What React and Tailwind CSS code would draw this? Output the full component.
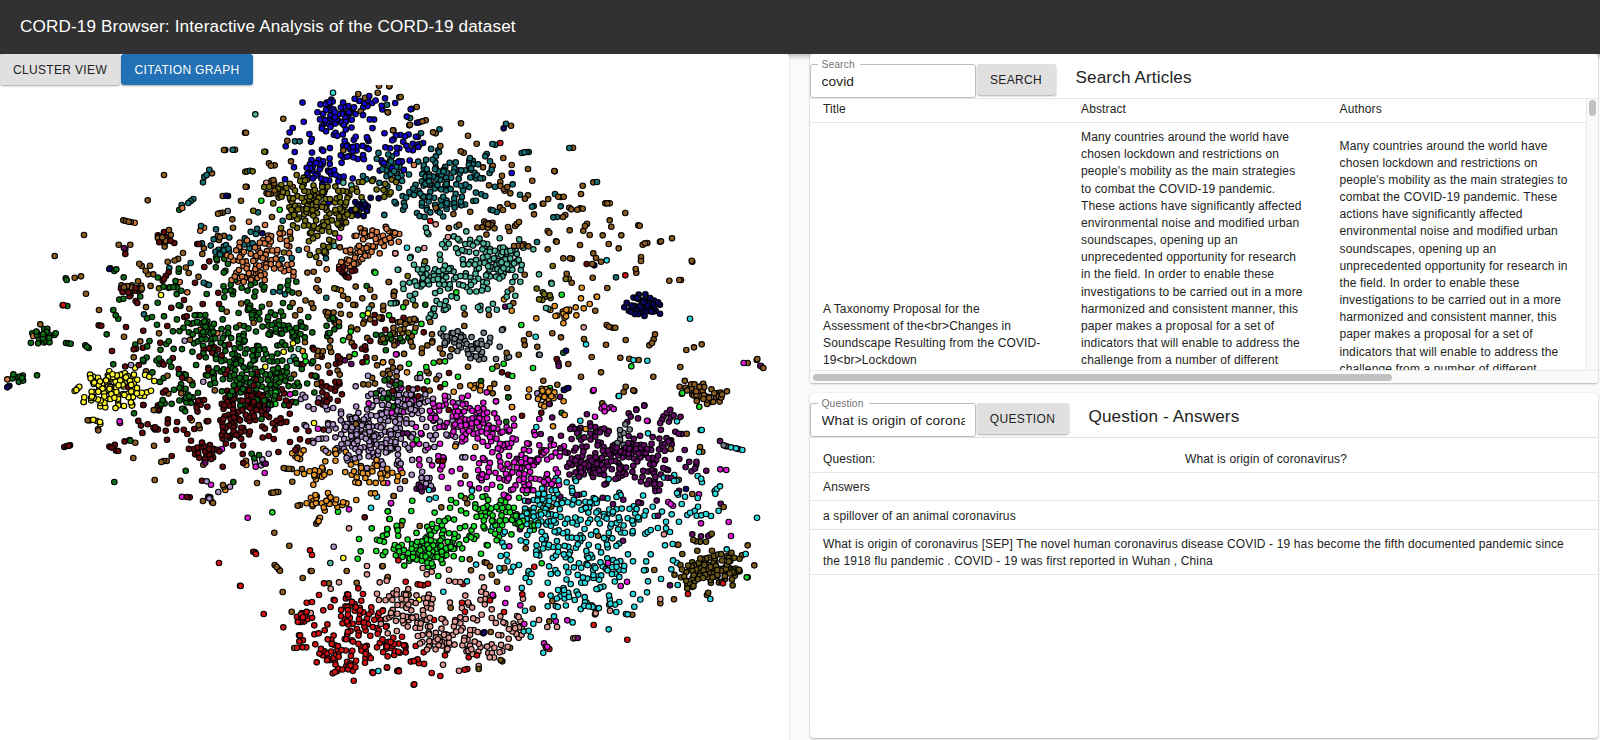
import React from "react";

const COLORS = {
  B: "#8c5c20", b: "#1606d2", t: "#167479", o: "#78720f", c: "#d77b45", g: "#0e6d17",
  m: "#670b0e", y: "#fbf52c", a: "#4fb79f", n: "#0b0764", s: "#77828b", l: "#ae92c8",
  M: "#e11bd9", p: "#640c68", G: "#1add28", C: "#2bdadf", r: "#d51317", k: "#e09892",
  O: "#e39225", d: "#6a5715",
};

// [colour, centre x, centre y, spread x, spread y, count]
const CLUSTERS = [
  ["b", 337, 115, 13, 7, 62], ["b", 318, 167, 8, 7, 32], ["b", 357, 151, 8, 7, 22], ["b", 370, 102, 10, 4, 12],
  ["b", 394, 153, 7, 11, 22], ["b", 350, 137, 30, 22, 46], ["b", 410, 145, 6, 8, 18], ["b", 334, 178, 7, 4, 10],
  ["t", 386, 172, 10, 9, 28], ["t", 440, 190, 22, 15, 80], ["t", 432, 197, 13, 10, 28], ["t", 458, 172, 17, 10, 26],
  ["t", 425, 172, 36, 24, 50], ["t", 220, 249, 8, 7, 15], ["t", 250, 238, 14, 6, 12],
  ["o", 322, 222, 14, 12, 74], ["o", 300, 198, 14, 10, 40], ["o", 338, 192, 18, 9, 28], ["o", 325, 207, 21, 12, 40],
  ["o", 280, 187, 7, 4, 10], ["o", 390, 183, 8, 8, 12], ["o", 307, 255, 14, 3, 9], ["o", 545, 294, 5, 4, 10],
  ["c", 255, 256, 14, 9, 62], ["c", 272, 246, 17, 9, 22], ["c", 378, 236, 11, 5, 36], ["c", 361, 252, 9, 5, 28],
  ["c", 243, 278, 8, 3, 18], ["c", 272, 268, 18, 8, 14], ["c", 347, 262, 5, 4, 10],
  ["g", 213, 338, 17, 9, 60], ["g", 262, 374, 19, 14, 90], ["g", 255, 360, 26, 22, 66], ["g", 263, 288, 22, 8, 26],
  ["g", 165, 355, 14, 22, 36], ["g", 257, 320, 15, 10, 24], ["g", 295, 331, 9, 4, 22], ["g", 43, 338, 6, 5, 26],
  ["g", 173, 288, 8, 4, 11], ["g", 220, 262, 8, 5, 10], ["g", 222, 375, 15, 14, 28], ["g", 330, 325, 6, 6, 12],
  ["g", 190, 305, 38, 20, 26], ["g", 185, 400, 16, 8, 24], ["g", 276, 394, 25, 12, 30], ["g", 18, 380, 4, 3, 10],
  ["g", 390, 340, 11, 5, 12], ["g", 390, 393, 9, 7, 12],
  ["m", 248, 393, 17, 10, 46], ["m", 243, 413, 13, 8, 46], ["m", 210, 450, 10, 5, 26], ["m", 232, 435, 8, 5, 24],
  ["m", 250, 410, 40, 24, 70], ["m", 133, 290, 8, 3, 13], ["m", 213, 347, 5, 3, 9], ["m", 347, 269, 5, 4, 12],
  ["m", 165, 239, 6, 3, 8], ["m", 155, 427, 14, 4, 16], ["m", 118, 447, 5, 3, 7], ["m", 330, 393, 10, 9, 18],
  ["m", 410, 393, 9, 4, 9], ["m", 180, 360, 48, 32, 24], ["m", 345, 345, 32, 30, 22],
  ["y", 113, 389, 15, 9, 112], ["y", 125, 385, 14, 9, 14],
  ["a", 440, 277, 14, 8, 58], ["a", 494, 266, 14, 10, 80], ["a", 465, 243, 12, 4, 20], ["a", 477, 284, 12, 6, 18],
  ["a", 505, 252, 11, 7, 18], ["a", 470, 300, 27, 9, 20], ["a", 436, 308, 5, 4, 10], ["a", 445, 270, 27, 21, 22],
  ["s", 456, 337, 9, 5, 26], ["s", 474, 346, 10, 7, 28], ["s", 623, 435, 5, 5, 9],
  ["n", 645, 305, 9, 5, 42], ["n", 360, 209, 5, 4, 14],
  ["l", 362, 434, 14, 12, 108], ["l", 398, 408, 15, 9, 58], ["l", 372, 442, 21, 15, 66], ["l", 390, 425, 18, 20, 36],
  ["l", 410, 397, 14, 9, 16], ["l", 445, 432, 11, 8, 14], ["l", 422, 478, 7, 5, 10], ["l", 325, 420, 10, 16, 18],
  ["O", 313, 473, 9, 3, 17], ["O", 330, 502, 11, 4, 28], ["O", 365, 472, 14, 6, 27], ["O", 299, 456, 5, 3, 8],
  ["O", 547, 393, 9, 6, 28], ["O", 567, 314, 8, 5, 14], ["O", 480, 388, 5, 3, 9], ["O", 385, 476, 9, 7, 10], ["O", 340, 453, 10, 4, 8],
  ["M", 474, 425, 15, 9, 72], ["M", 495, 432, 18, 10, 26], ["M", 515, 463, 16, 12, 58], ["M", 540, 480, 11, 7, 24],
  ["M", 440, 415, 22, 14, 36], ["M", 500, 475, 22, 12, 28], ["M", 550, 450, 11, 5, 14], ["M", 430, 458, 34, 15, 24], ["M", 607, 408, 4, 2, 7],
  ["p", 589, 467, 11, 6, 48], ["p", 627, 451, 14, 5, 46], ["p", 587, 433, 11, 6, 24], ["p", 643, 470, 16, 11, 38],
  ["p", 614, 456, 24, 14, 44], ["p", 657, 445, 9, 10, 18], ["p", 425, 485, 5, 3, 9], ["p", 657, 490, 2, 6, 9],
  ["p", 670, 417, 5, 4, 10], ["p", 691, 467, 5, 3, 7], ["p", 587, 449, 36, 22, 24],
  ["C", 573, 505, 30, 18, 84], ["C", 565, 525, 28, 17, 48], ["C", 625, 515, 18, 12, 38], ["C", 560, 548, 20, 12, 36],
  ["C", 590, 568, 19, 8, 34], ["C", 565, 596, 9, 5, 20], ["C", 603, 607, 10, 5, 18], ["C", 605, 540, 24, 20, 26],
  ["C", 570, 565, 58, 26, 32], ["C", 545, 500, 10, 10, 20], ["C", 678, 505, 20, 18, 12],
  ["G", 425, 551, 15, 8, 94], ["G", 430, 540, 23, 13, 46], ["G", 500, 512, 22, 8, 44], ["G", 480, 522, 20, 10, 22],
  ["G", 465, 505, 40, 12, 24], ["G", 525, 518, 9, 7, 16], ["G", 400, 345, 35, 17, 9],
  ["d", 713, 568, 12, 7, 104], ["d", 683, 578, 7, 6, 18], ["d", 710, 572, 17, 10, 16],
  ["r", 362, 622, 12, 10, 36], ["r", 345, 635, 22, 16, 46], ["r", 303, 618, 4, 3, 17], ["r", 350, 605, 5, 4, 14],
  ["r", 390, 648, 8, 5, 22], ["r", 330, 655, 8, 4, 12], ["r", 350, 668, 3, 5, 11], ["r", 417, 661, 4, 2, 8], ["r", 355, 647, 20, 11, 20],
  ["k", 408, 602, 13, 8, 34], ["k", 440, 636, 13, 8, 38], ["k", 410, 617, 16, 8, 28], ["k", 452, 640, 17, 8, 20],
  ["k", 482, 650, 13, 4, 20], ["k", 455, 612, 26, 14, 28], ["k", 517, 625, 6, 6, 17], ["k", 485, 597, 5, 3, 8],
  ["B", 400, 338, 9, 5, 14], ["B", 405, 322, 7, 2, 11], ["B", 708, 397, 8, 5, 34], ["B", 692, 388, 6, 4, 12],
  ["B", 275, 190, 8, 8, 12], ["B", 165, 237, 4, 3, 7], ["B", 130, 286, 5, 4, 11], ["B", 487, 227, 6, 3, 8],
  ["B", 370, 370, 52, 25, 44], ["B", 330, 305, 38, 26, 34], ["B", 500, 215, 50, 26, 18], ["B", 445, 350, 60, 40, 34],
  ["B", 240, 300, 60, 34, 26], ["B", 180, 400, 24, 20, 14],
];

// Share of each cluster's papers that gets drawn.
const DENSITY = 0.8;

// Individually placed papers. Each tile has its own origin, in thirds of a pixel.
const TILES = [
  [0, 80, {
    B: "850,116 735,158 738,158 672,210 676,210 705,209 862,182 873,244 807,250 813,257 824,256 492,285 443,361 737,320 740,320 636,280 668,348 723,362 654,401 660,399 668,398 697,418 699,443 816,411 370,421 378,423 386,425 392,426 252,465 164,528 356,494 391,494 507,450 549,519 607,522 503,545 418,551 425,558 437,572 450,557 444,583 460,583 224,593 243,589 258,641 566,579 297,690 372,770 121,733 401,832 438,874 1137,17 1168,19 1075,42 1095,53 1133,38 1163,97 1082,94 1179,151 1030,211 1166,606 1183,635 1087,655 1123,651 1072,748 1048,772 1149,881 568,686 680,695 421,784 477,760 544,940 953,600 941,575 949,624 896,640 900,690 1020,676",
    t: "885,184 899,184 698,209 628,269 613,290 609,307 620,285 580,357 572,363 565,369 545,375 750,272 774,397 603,438 572,549 508,564 606,490 611,608 620,613 627,615 432,703 1161,74 848,422 648,448 641,478 845,538 875,534 896,510 978,535 855,643 839,634 820,636 979,653 1089,288",
    C: "999,38 1181,640",
    a: "766,103 1030,308 1054,316 1003,498 1193,569 1187,669 1107,686 881,831 896,807 870,843",
    b: "878,144 911,125 857,199 884,216 882,262 855,298 987,367 967,313 972,338",
    o: "793,215 796,215 736,275 742,274 758,274 760,392 890,285 843,444 879,436 872,476 477,625 1003,625 1010,627",
    c: "404,428 547,384 612,443 601,452 747,425 795,435 539,606 562,637 100,768 22,898 980,568 954,862 600,750 652,760",
    n: "679,347 684,348 787,460 331,565 328,567 1087,385 1136,355 1112,353 22,922 28,917",
    G: "784,362 839,389 1123,575 1126,578 1088,706 914,828 917,844 827,937 826,972",
    k: "799,308 1186,520",
    s: "683,393",
    M: "1018,473 1188,823 870,943 1106,970",
    m: "592,492 597,492 376,522 523,489 492,596 498,587 506,577 488,602 407,663 412,669 514,683 552,660 613,561 628,544 585,608 655,638 657,672 608,672 296,736 304,737 378,741 336,813 408,806 401,808 430,752 502,738 553,711 560,709 430,975 989,878 965,830 1063,799 1008,852 1019,847 1124,705 1145,712 1177,720 1173,905 1111,783",
    p: "372,504 376,508 1035,841 1054,852",
    r: "188,676 190,675",
    y: "483,645 229,930 233,925 238,920 224,933 251,966 405,863 448,890 463,903 453,932 441,937 432,948 879,790 851,815 796,860 1104,700",
    O: "1023,631 908,813 1149,847",
    g: "349,568 343,573 197,595 200,600 202,678 340,690 347,706 355,716 320,763 198,789 205,790 212,791 256,796 261,800 266,804 111,886 340,853 473,668 492,709 456,711 441,715 538,389 584,706 592,705 601,706 616,705 925,711 870,681 889,605 865,602 1100,618",
    l: "554,782 393,855 610,905 1104,887 1067,919 908,944 916,952 903,957",
  }],
  [380, 80, {
    B: "28,18 58,52 62,51 110,81 24,97 137,121 127,124 88,136 90,134 40,151 243,130 159,157 167,160 264,167 290,191 181,198 242,214 251,218 370,234 338,257 395,255 444,267 457,302 393,137 579,203 523,273 524,274 608,317 640,307 603,342 444,346 399,378 535,350 542,351 551,350 490,371 488,371 676,370 682,370 736,399 568,383 574,388 592,389 600,385 608,386 462,403 556,405 549,411 689,421 694,440 775,436 779,437 621,431 615,438 610,452 629,465 668,466 724,466 686,492 716,505 600,495 569,451 503,453 508,458 530,485 528,484 503,508 417,426 410,432 405,438 384,441 388,453 876,475 840,485 843,484 802,489 795,490 788,494 550,535 570,535 576,536 640,520 648,534 637,552 663,545 783,531 783,543 767,567 769,578 638,593 682,624 935,542 937,545 868,602 898,600 903,600 560,581 566,596 575,608 650,650 646,692 680,735 687,740 698,743 706,743 543,772 612,777 678,794 737,780 825,763 821,778 816,789 808,796 919,810 942,802 965,793 635,831 721,833 748,836 776,840 901,861 663,877 820,890 603,890 565,852 416,824 432,781 447,762 1132,837 1103,849 1150,864 737,920 731,936 760,931 763,933 1041,934 532,914 490,902 27,606 43,635 10,677 151,726 156,763 253,738 264,860 327,705 434,584 402,498 413,497 425,497 431,493 445,499 382,924 667,970 361,306 371,326 374,332 382,321 361,318 327,316 360,382 369,390 366,287 309,262",
    t: "378,131 425,219 433,217 440,216 446,216 568,204 316,229 320,222 651,306 525,342 531,411 520,412 542,379 456,380 461,378 420,344 398,313 332,389 338,391 350,396 471,486 708,592 345,320 280,363 288,362 316,348 301,295 309,295",
    n: "371,145 643,556 558,812 562,925 552,929 840,701 733,682 740,668 565,924",
    r: "361,189 151,423 736,586", b: "395,279 111,128 118,127 92,88 95,86 15,55",
    k: "204,471 133,504 46,520 611,742 167,433", C: "81,503 680,541 930,716 618,793 760,840 802,842 717,948 467,770",
    c: "1130,840 58,462 56,485 102,255", O: "689,370 605,623 603,655 629,672 611,685 587,682 651,650 395,692 469,715 511,690 524,678 372,658 445,950 396,981 81,877 9,847 221,935",
    G: "545,644 229,637 424,735 459,864 371,851 337,866 397,888 234,890 195,844 161,848 139,861 87,851 142,904 195,912 754,859 120,882 27,706 510,924 905,941",
    m: "620,552 530,837 366,877 385,884 131,757 37,720 5,717 207,879 181,922 33,904",
    p: "376,680 535,848 536,858 1144,859 1141,857 793,976 540,950 507,972 769,988",
    M: "1091,849 641,930 639,933 50,823 348,964 163,980 293,984 64,924 320,937 50,790",
    a: "514,608 515,611 477,583 421,605 383,635 380,650 406,647 460,508 55,569 90,534 92,530 89,647 47,668 41,670 32,670 190,746 498,684 505,686 102,554",
    s: "477,824 479,824 369,747 366,750 359,800 381,833 387,831 348,837 210,829 320,797",
    l: "50,874 112,894 177,887 204,950 159,956 235,970 472,940",
    o: "518,558 135,544 83,588 557,597 106,676 85,758 50,668", g: "125,607 136,674 385,952 303,903 550,818",
  }],
  [0, 380, {
    B: "263,121 270,121 290,123 294,148 295,151 406,188 400,234 462,197 484,246 491,243 500,243 464,300 541,302 610,254 771,309 877,305 851,264 859,266 867,266 875,267 906,267 814,338 820,338 835,336 893,377 900,375 949,431 953,425 823,458 868,497 824,555 830,561 840,572 908,594 932,573 935,573 848,636 875,695 1040,573 1147,559 1070,608 987,610 1163,591 609,363 636,366 639,369 669,315 671,320 738,242 883,804",
    M: "359,124 360,129 633,314 546,350 666,207 743,413 794,279 767,260 954,146 1047,388 1173,369 1162,309 1175,98",
    m: "193,201 200,198 206,197 210,196 515,228 501,179 668,260 606,302 560,351 569,352 765,517 760,515 1094,412 573,182 562,162 583,147 529,150 430,75 870,186 900,178 925,184 806,168 821,177",
    g: "402,100 389,180 343,306 557,272 700,306 755,221 777,225 763,235 625,350 631,352 391,182",
    y: "280,119 300,126 301,132 251,66 301,79 942,129 1030,534",
    l: "806,221 787,238 765,247 783,256 620,304 655,336 690,320 628,355 1001,500 614,247",
    p: "616,248 797,251 792,250 803,87", O: "827,336 831,336 676,330 739,255 984,339 957,416 960,413 956,423 940,314 1069,360 1181,348 1113,340 1125,340 976,244 970,206 985,218 575,121",
    C: "1131,350 1113,383 1135,873", G: "817,397 1014,395 1163,394 1168,417 1115,445 1162,447 1077,477 1131,479 1139,482 1082,514 1129,513 1149,525 1073,536 1181,506",
    k: "1047,445 1101,558 1101,583 1017,607 992,626 1139,607 1160,602 1131,641 1137,660 1180,640 932,699 1158,716 1168,712 1163,760",
    a: "991,549", r: "657,549 768,522 836,568 722,618 720,617 791,702 850,742 930,511 936,525 972,610 957,645 936,666 920,668 1075,625 1089,642 1084,662 1004,661 1001,659 943,736 956,760 900,766 897,766 983,778 946,793 891,803 907,802 919,802 950,847 1012,873 998,880 1005,876 1061,902 1114,682 1149,691 1160,738 1161,862 1119,879 1095,848 1192,873 1117,876",
  }],
  [380, 380, {
    p: "793,77 769,90 742,126 873,207 914,210 898,237 834,227 979,272 1020,183 1075,207 850,264 864,270 858,268 543,167 482,162 512,178 541,205 555,217 563,218 1022,371 897,332 937,463 963,469 985,468 834,407 870,616 699,372 730,359 775,367 783,369 668,353 729,482 590,345 597,344 541,350 445,364 420,448 593,774 886,155 896,161 905,162 68,160 82,160",
    M: "801,122 803,123 645,110 1021,268 1039,270 957,343 1046,426 963,430 1053,468 865,366 872,372 879,377 684,549 741,605 722,618 388,499 382,626 376,669 421,676 433,732 562,721 527,724 338,644 492,790 33,370 204,324 215,274 185,290 62,270 276,328 305,301 320,327 371,344 348,64 343,100 478,117 502,800",
    C: "716,48 601,122 469,141 804,160 891,124 965,150 962,150 1040,199 1053,202 1068,205 1087,210 957,216 953,288 890,302 882,303 1020,319 1010,327 1004,333 1006,341 953,354 915,350 905,372 954,380 922,405 875,403 950,407 964,406 978,402 993,408 1131,413 897,425 858,425 858,445 870,456 818,380 824,408 855,496 878,492 893,494 1040,508 1097,522 812,523 744,523 759,544 879,541 890,548 874,568 797,570 792,571 843,597 804,604 893,615 991,657 801,637 759,642 718,666 763,680 709,696 738,702 743,703 686,748 522,709 503,679 452,770 431,754 446,752 460,731 435,692 338,440 369,461 374,455 367,488 362,528 380,524 417,555 400,560 392,575 437,594 448,606 512,582 503,608 572,612 604,608 615,608 655,627 190,635 147,330 148,358 167,353 261,604 276,332 490,818 796,461 803,456 812,450 731,571",
    B: "41,348 75,303 256,287 255,355 262,370 184,382 64,436 119,438 8,558 23,593 437,505 373,564 269,538 273,571 314,547 320,549 330,559 335,584 351,605 654,467 1103,496 1086,526 1031,381 960,201 967,215 937,342 823,570 882,658 841,670 757,704 517,663 458,686 508,724 1123,556 332,756 390,803 920,161 896,299 895,494 86,644 872,207 212,683",
    d: "907,522 952,512 996,512 995,461 940,480 948,484 960,485 978,485 990,465 367,844 362,840 514,380 296,867 1063,533",
    r: "55,541 77,605 144,611 113,613 121,614 130,616 249,612 463,560 427,643 485,644 645,703 641,735 742,779 924,642 1029,610 330,661 372,696 162,720 255,695 246,668 77,817 107,798 131,817 195,826 266,832 291,826 21,863 57,874 56,871 155,879 181,888 262,867 254,869 101,914 103,913 497,800 508,807 8,693 18,740 40,773 66,770",
    k: "128,564 155,575 140,583 207,569 306,592 207,602 226,605 241,606 312,622 429,656 841,657 690,692 647,700 531,741 502,741 477,720 586,774 580,775 189,854 237,872 296,858 386,776 383,800 928,603 852,463 335,688 335,714 370,727 376,730 355,765 364,766 305,704 291,721 241,712 248,744 281,750 270,764",
    G: "110,179 213,360 97,362 24,394 29,417 22,447 94,393 303,521 320,495 323,496 247,505 175,588 1100,592 1103,592 9,525 55,467 439,339 361,320 907,39 958,80 485,550",
    O: "519,139 554,105 396,81 445,50 22,286 286,201 226,199 617,147 10,308 37,278",
    g: "379,125 545,98 385,52 597,171", s: "1031,196 1037,198 720,150", n: "918,327 310,760 313,757 552,30",
    m: "484,98 426,107 484,215 206,90 189,243 175,242", y: "117,659", l: "60,326 136,211 148,240 138,195 159,178 163,201 247,232 256,232 95,284",
  }],
];

function createRandom(seed) {
  let s = seed;
  return () => {
    s = (s + 0x6d2b79f5) | 0;
    let t = Math.imul(s ^ (s >>> 15), 1 | s);
    t = (t + Math.imul(t ^ (t >>> 7), 61 | t)) ^ t;
    return ((t ^ (t >>> 14)) >>> 0) / 4294967296;
  };
}

function buildPoints() {
  const rnd = createRandom(19);
  const pts = [];
  for (const [ox, oy, groups] of TILES) {
    for (const color of Object.keys(groups)) {
      for (const pair of groups[color].split(" ")) {
        const [x, y] = pair.split(",").map(Number);
        pts.push([ox + x / 3, oy + y / 3, color]);
      }
    }
  }
  const draw = () => {
    let r;
    do r = Math.sqrt(-2 * Math.log(1 - rnd()));
    while (r > 2.3);
    return r;
  };
  for (const [color, cx, cy, sx, sy, count] of CLUSTERS) {
    const total = Math.round(count * DENSITY);
    for (let i = 0; i < total; i++) {
      const last = pts[pts.length - 1];
      if (i > 0 && rnd() < 0.22) {
        const a = rnd() * Math.PI * 2;
        const d = 1.5 + rnd() * 3;
        pts.push([last[0] + Math.cos(a) * d, last[1] + Math.sin(a) * d, color]);
        continue;
      }
      let best = null;
      let bestGap = -1;
      for (let k = 0; k < 3; k++) {
        const r = draw();
        const a = rnd() * Math.PI * 2;
        const x = cx + Math.cos(a) * r * sx;
        const y = cy + Math.sin(a) * r * sy;
        let gap = 99;
        for (const p of pts) gap = Math.min(gap, Math.hypot(p[0] - x, p[1] - y));
        if (gap > bestGap) {
          bestGap = gap;
          best = [x, y, color];
        }
        if (gap > 4.2) break;
      }
      pts.push(best);
    }
  }
  for (let i = pts.length - 1; i > 0; i--) {
    const j = Math.floor(rnd() * (i + 1));
    [pts[i], pts[j]] = [pts[j], pts[i]];
  }
  return pts;
}

const POINTS = buildPoints();

function ClusterPlot() {
  return (
    <svg className="block h-[655px] w-[789px]" viewBox="0 85 789 655">
      {POINTS.map(([x, y, c], i) => (
        <circle key={i} cx={x.toFixed(1)} cy={y.toFixed(1)} r="2.75" fill={COLORS[c]} stroke="#000" strokeWidth="1.15" />
      ))}
    </svg>
  );
}

const PAPER = "rounded-[3px] bg-white shadow-[0_1px_2px_rgba(0,0,0,0.28),0_0_1px_rgba(0,0,0,0.2)]";
const BUTTON = "h-[31px] shrink-0 rounded-[3px] pt-[1px] text-[12px] leading-[30px] whitespace-nowrap text-center shadow-[0_1px_2px_rgba(0,0,0,0.35)]";

function Field({ label, value, legend }) {
  return (
    <div className="relative h-[34px] w-[166px] shrink-0">
      <fieldset className="absolute inset-x-0 -top-[4px] bottom-0 rounded-[3px] border border-[#bdbdbd] pl-[7px]">
        <legend className={`h-[8px] ${legend}`} />
      </fieldset>
      <span className="absolute -top-[5px] left-[12px] text-[10.3px] leading-[12px] tracking-[0.1px] text-[#757575]">{label}</span>
      <input
        className="absolute top-[9px] left-[12px] h-[18px] w-[143px] bg-transparent text-[13.7px] leading-[18px] tracking-[0.12px] outline-none"
        defaultValue={value}
        aria-label={label}
      />
    </div>
  );
}

function Lines({ lines }) {
  return lines.map((line) => (
    <div key={line} className="whitespace-nowrap">{line}</div>
  ));
}

const TITLE = ["A Taxonomy Proposal for the", "Assessment of the<br>Changes in", "Soundscape Resulting from the COVID-", "19<br>Lockdown"];
const ABSTRACT = [
  "Many countries around the world have", "chosen lockdown and restrictions on", "people's mobility as the main strategies",
  "to combat the COVID-19 pandemic.", "These actions have significantly affected", "environmental noise and modified urban",
  "soundscapes, opening up an", "unprecedented opportunity for research", "in the field. In order to enable these",
  "investigations to be carried out in a more", "harmonized and consistent manner, this", "paper makes a proposal for a set of",
  "indicators that will enable to address the", "challenge from a number of different",
];
const AUTHORS = [
  "Many countries around the world have", "chosen lockdown and restrictions on", "people's mobility as the main strategies to",
  "combat the COVID-19 pandemic. These", "actions have significantly affected", "environmental noise and modified urban",
  "soundscapes, opening up an", "unprecedented opportunity for research in", "the field. In order to enable these",
  "investigations to be carried out in a more", "harmonized and consistent manner, this", "paper makes a proposal for a set of",
  "indicators that will enable to address the", "challenge from a number of different",
];

export default function App() {
  return (
    <div className="flex h-[740px] w-[1600px] flex-col overflow-hidden bg-[#fafafa] font-['Liberation_Sans',Arial,sans-serif] text-[12px] leading-[17.17px] tracking-[0.13px] text-[#222]">
      <header className="z-30 flex h-[54px] shrink-0 items-center bg-[#313131] pl-[20px] text-[17.14px] tracking-[0.14px] whitespace-nowrap text-white">
        <h1>CORD-19 Browser: Interactive Analysis of the CORD-19 dataset</h1>
      </header>
      <div className="flex min-h-0 flex-1 bg-[linear-gradient(#c4c4c4,#fafafa_6px)]">
        <section className="w-[789px] shrink-0 rounded-t-[3px] bg-white shadow-[0_0_2px_rgba(0,0,0,0.22)]">
          <div className="flex gap-[1px]">
            <button className={`${BUTTON} w-[120px] bg-[#e0e0e0] tracking-[0.34px]`}>CLUSTER VIEW</button>
            <button className={`${BUTTON} w-[132px] bg-[#2270b5] tracking-[0.34px] text-white`}>CITATION GRAPH</button>
          </div>
          <ClusterPlot />
        </section>

        <div className="ml-[20.5px] flex w-[788.5px] flex-col gap-[10px]">
          <section className={`${PAPER} flex h-[329px] shrink-0 flex-col overflow-hidden`}>
            <div className="flex h-[45px] shrink-0 items-start border-b border-[#e6e6e6] pt-[10px]">
              <Field label="Search" value="covid" legend="w-[42px]" />
              <button className={`${BUTTON} ml-[1px] w-[79px] bg-[#e0e0e0] tracking-[0.34px]`}>SEARCH</button>
              <h2 className="mt-[3px] ml-[20px] text-[17.14px] leading-[20px]">Search Articles</h2>
            </div>
            <div className="flex min-h-0 flex-1">
              <div className="flex w-[776px] flex-col overflow-hidden">
                <div className="flex h-[24px] shrink-0 border-b border-[#e6e6e6] pt-[2px]">
                  <div className="w-[258px] pl-[13.5px]">Title</div>
                  <div className="w-[259px] pl-[13.5px]">Abstract</div>
                  <div className="pl-[13px]">Authors</div>
                </div>
                <div className="flex min-h-0 flex-1 overflow-hidden">
                  <div className="w-[258px] pt-[177.5px] pl-[13.5px]"><Lines lines={TITLE} /></div>
                  <div className="w-[259px] pt-[6px] pl-[13.5px]"><Lines lines={ABSTRACT} /></div>
                  <div className="pt-[14.5px] pl-[13px]"><Lines lines={AUTHORS} /></div>
                </div>
              </div>
              <div className="flex flex-1 justify-center border-l border-[#e8e8e8] bg-[#fafafa] pt-[1px]">
                <div className="h-[16px] w-[7px] rounded-full bg-[#c1c1c1]" />
              </div>
            </div>
            <div className="flex h-[13px] shrink-0 items-center border-t border-[#e8e8e8] bg-[#fafafa] pl-[3px]">
              <div className="h-[7px] w-[579px] rounded-full bg-[#c1c1c1]" />
            </div>
          </section>

          <section className={`${PAPER} h-[345px] shrink-0`}>
            <div className="flex h-[45px] items-start border-b border-[#e0e0e0] pt-[10px]">
              <Field label="Question" value="What is origin of coronavirus?" legend="w-[51px]" />
              <button className={`${BUTTON} ml-[1px] w-[92px] bg-[#e0e0e0] tracking-[0.34px]`}>QUESTION</button>
              <h2 className="mt-[3px] ml-[20px] text-[17.14px] leading-[20px]">Question - Answers</h2>
            </div>
            <div className="flex h-[35px] border-b border-[#e6e6e6] pt-[13px] pl-[13.5px]">
              <div className="w-[362px]">Question:</div>
              <div>What is origin of coronavirus?</div>
            </div>
            <div className="h-[28px] border-b border-[#e6e6e6] pt-[6px] pl-[13.5px]">Answers</div>
            <div className="h-[29px] border-b border-[#e0e0e0] pt-[6.5px] pl-[13.5px]">a spillover of an animal coronavirus</div>
            <div className="h-[45px] border-b border-[#e6e6e6] pt-[6px] pl-[13.5px]">
              <Lines
                lines={[
                  "What is origin of coronavirus [SEP] The novel human coronavirus disease COVID - 19 has become the fifth documented pandemic since",
                  "the 1918 flu pandemic . COVID - 19 was first reported in Wuhan , China",
                ]}
              />
            </div>
          </section>
        </div>
      </div>
    </div>
  );
}
